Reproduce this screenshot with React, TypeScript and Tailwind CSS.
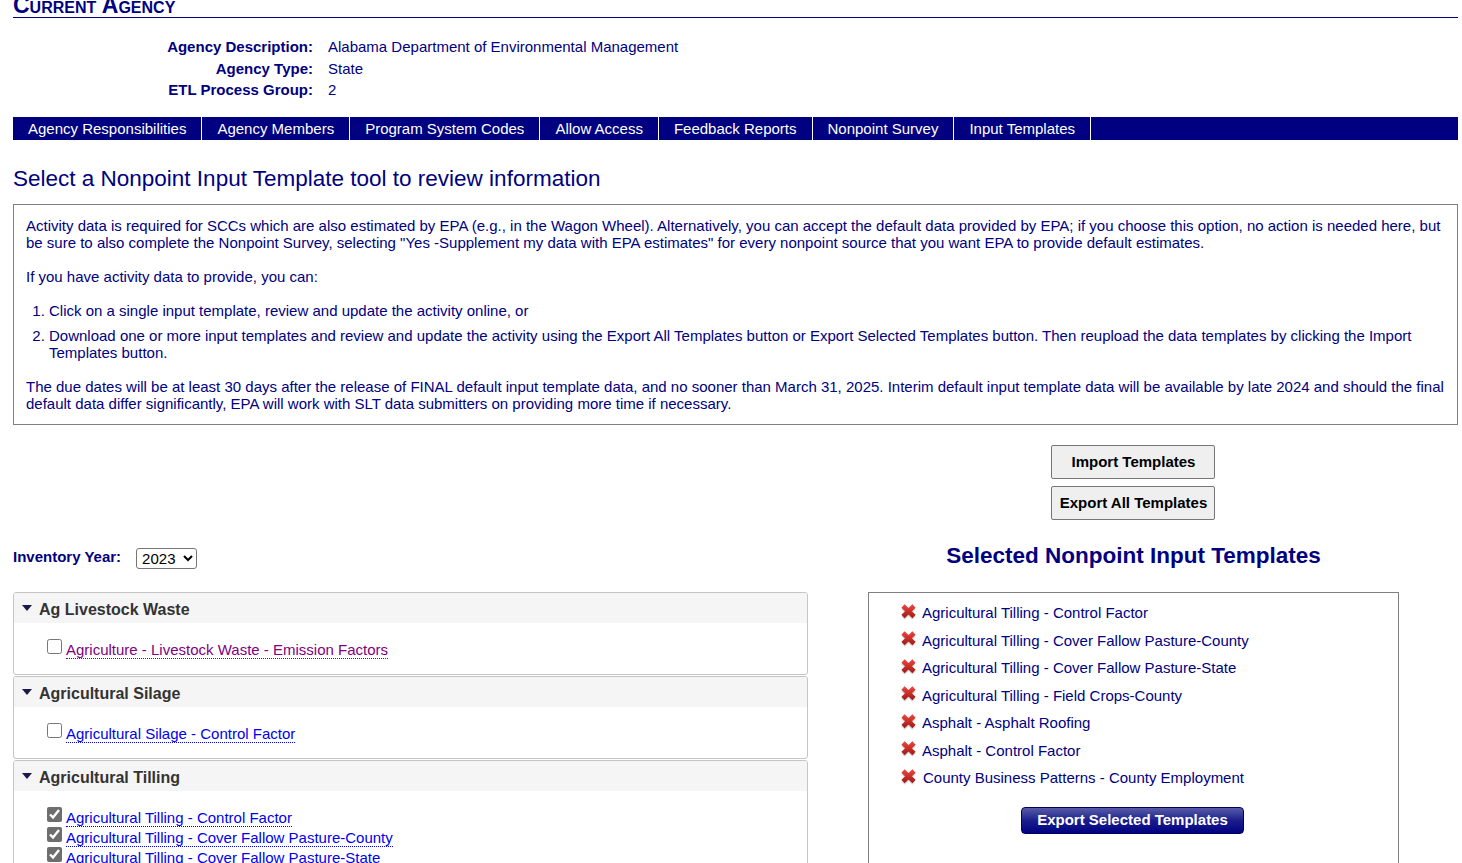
const font = { fontFamily: '"Liberation Sans", Arial, sans-serif' };

const tabs = [
  "Agency Responsibilities",
  "Agency Members",
  "Program System Codes",
  "Allow Access",
  "Feedback Reports",
  "Nonpoint Survey",
  "Input Templates",
];

const selected = [
  "Agricultural Tilling - Control Factor",
  "Agricultural Tilling - Cover Fallow Pasture-County",
  "Agricultural Tilling - Cover Fallow Pasture-State",
  "Agricultural Tilling - Field Crops-County",
  "Asphalt - Asphalt Roofing",
  "Asphalt - Control Factor",
  "County Business Patterns - County Employment",
];

function RedX() {
  return (
    <svg width="17" height="18" viewBox="0 0 17 18" className="shrink-0 -mt-[3px]">
      <defs>
        <linearGradient id="xg" x1="0" y1="0" x2="0" y2="1">
          <stop offset="0" stopColor="#e8403a" />
          <stop offset="1" stopColor="#a81e1a" />
        </linearGradient>
      </defs>
      <path d="M3 3 L14 13.5 M14 3 L3 13.5" stroke="#b5b5b5" strokeWidth="5" transform="translate(0 1.5)" opacity="0.55" />
      <path d="M3 3 L14 13.5 M14 3 L3 13.5" stroke="url(#xg)" strokeWidth="4.6" />
    </svg>
  );
}

function Item({ label, checked, visited }: { label: string; checked?: boolean; visited?: boolean }) {
  return (
    <div className="flex items-start h-[20px]">
      <input type="checkbox" checked={!!checked} readOnly className="w-[15px] h-[15px] m-0 mr-[4px] shrink-0 accent-[#6e6e6e]" />
      <a
        href="#"
        className={`mt-[2px] leading-[17px] border-b border-dotted ${visited ? "text-[#800080] border-[#800080]" : "text-[#0000ee] border-[#0000ee]"}`}
      >
        {label}
      </a>
    </div>
  );
}

function Section({ title, children }: { title: string; children: React.ReactNode }) {
  return (
    <div className="border border-[#c5c5c5] rounded-[3px] mb-[1px] overflow-hidden">
      <div className="h-[30px] bg-[#f5f5f5] flex items-center pl-[8px] pt-[5px] text-[16px] font-bold text-[#333333]">
        <svg width="10" height="6" viewBox="0 0 10 6" className="mr-[7px] -mt-[5px]">
          <path d="M0 0 H10 L5 6 Z" fill="#1a1a4a" />
        </svg>
        {title}
      </div>
      <div className="pt-[16px] pl-[33px] pb-[15px]">{children}</div>
    </div>
  );
}

export default function App() {
  return (
    <div style={font} className="h-[863px] overflow-hidden bg-white text-[#000080] text-[15px] px-[13px] pr-[4px]">
      <h1 className="-mt-[6px] h-[24px] border-b border-[#000080] text-[23px] leading-[22px] font-bold [font-variant:small-caps]">
        Current Agency
      </h1>

      <div className="grid grid-cols-[300px_1fr] gap-x-[15px] mt-[18px] leading-[21.5px]">
        <div className="font-bold text-right">Agency Description:</div>
        <div>Alabama Department of Environmental Management</div>
        <div className="font-bold text-right">Agency Type:</div>
        <div>State</div>
        <div className="font-bold text-right">ETL Process Group:</div>
        <div>2</div>
      </div>

      <nav className="mt-[16px] h-[23px] bg-[#000080] flex text-white">
        {tabs.map((t) => (
          <div key={t} className="px-[15px] leading-[23px] border-r border-white">
            {t}
          </div>
        ))}
      </nav>

      <h2 className="mt-[23px] text-[22.5px] leading-[32px] font-normal">Select a Nonpoint Input Template tool to review information</h2>

      <div className="mt-[9px] border border-[#808080] px-[12px] pt-[12px] pb-[12px] leading-[17px]">
        <p>
          Activity data is required for SCCs which are also estimated by EPA (e.g., in the Wagon Wheel). Alternatively, you can accept the default data provided by EPA; if you choose this option, no action is needed here, but be sure to also complete the Nonpoint Survey, selecting "Yes -Supplement my data with EPA estimates" for every nonpoint source that you want EPA to provide default estimates.
        </p>
        <p className="mt-[17px]">If you have activity data to provide, you can:</p>
        <ol className="mt-[17px] list-decimal pl-[23px]">
          <li className="mb-[8px]">Click on a single input template, review and update the activity online, or</li>
          <li>
            Download one or more input templates and review and update the activity using the Export All Templates button or Export Selected Templates button. Then reupload the data templates by clicking the Import Templates button.
          </li>
        </ol>
        <p className="mt-[17px]">
          The due dates will be at least 30 days after the release of FINAL default input template data, and no sooner than March 31, 2025. Interim default input template data will be available by late 2024 and should the final default data differ significantly, EPA will work with SLT data submitters on providing more time if necessary.
        </p>
      </div>

      <div className="flex mt-[20px]">
        <div className="w-[795px] shrink-0 pt-[103px]">
          <div className="flex items-center h-[21px] font-bold">
            <span className="-mt-[2px]">Inventory Year:</span>
            <select className="ml-[15px] h-[21px] w-[61px] pl-[1px] text-[15px] font-normal text-black bg-white border border-[#767676] rounded-[3px] leading-none" defaultValue="2023">
              <option>2023</option>
            </select>
          </div>
          <div className="mt-[23px]">
            <Section title="Ag Livestock Waste">
              <Item label="Agriculture - Livestock Waste - Emission Factors" visited />
            </Section>
            <Section title="Agricultural Silage">
              <Item label="Agricultural Silage - Control Factor" />
            </Section>
            <Section title="Agricultural Tilling">
              <Item label="Agricultural Tilling - Control Factor" checked />
              <Item label="Agricultural Tilling - Cover Fallow Pasture-County" checked />
              <Item label="Agricultural Tilling - Cover Fallow Pasture-State" checked />
            </Section>
          </div>
        </div>

        <div className="ml-[60px] w-[531px] shrink-0">
          <div className="flex flex-col items-center gap-[7px] pr-[2px]">
            <button className="w-[164px] h-[34px] pt-[2px] pl-[2px] bg-[#efefef] border border-[#767676] rounded-[2px] font-bold text-black">Import Templates</button>
            <button className="w-[164px] h-[34px] pt-[2px] pl-[2px] bg-[#efefef] border border-[#767676] rounded-[2px] font-bold text-black">Export All Templates</button>
          </div>
          <h3 className="mt-[20px] text-center text-[22.5px] leading-[32px] font-bold">Selected Nonpoint Input Templates</h3>
          <div className="mt-[20px] border border-[#808080] h-[400px] pl-[31px] pt-[7px]">
            {selected.map((s, i) => (
              <div key={s} className="flex items-center h-[27.5px] gap-[5px]">
                <RedX />
                <span className={i === 6 ? "ml-px" : ""}>{s}</span>
              </div>
            ))}
            <div className="flex justify-center mt-[15px] pr-[33px]">
              <button className="w-[223px] h-[27px] rounded-[4px] border border-[#000060] bg-gradient-to-b from-[#5a5aa6] via-[#1c1c8c] to-[#000080] text-white font-bold">
                Export Selected Templates
              </button>
            </div>
          </div>
        </div>
      </div>
    </div>
  );
}
